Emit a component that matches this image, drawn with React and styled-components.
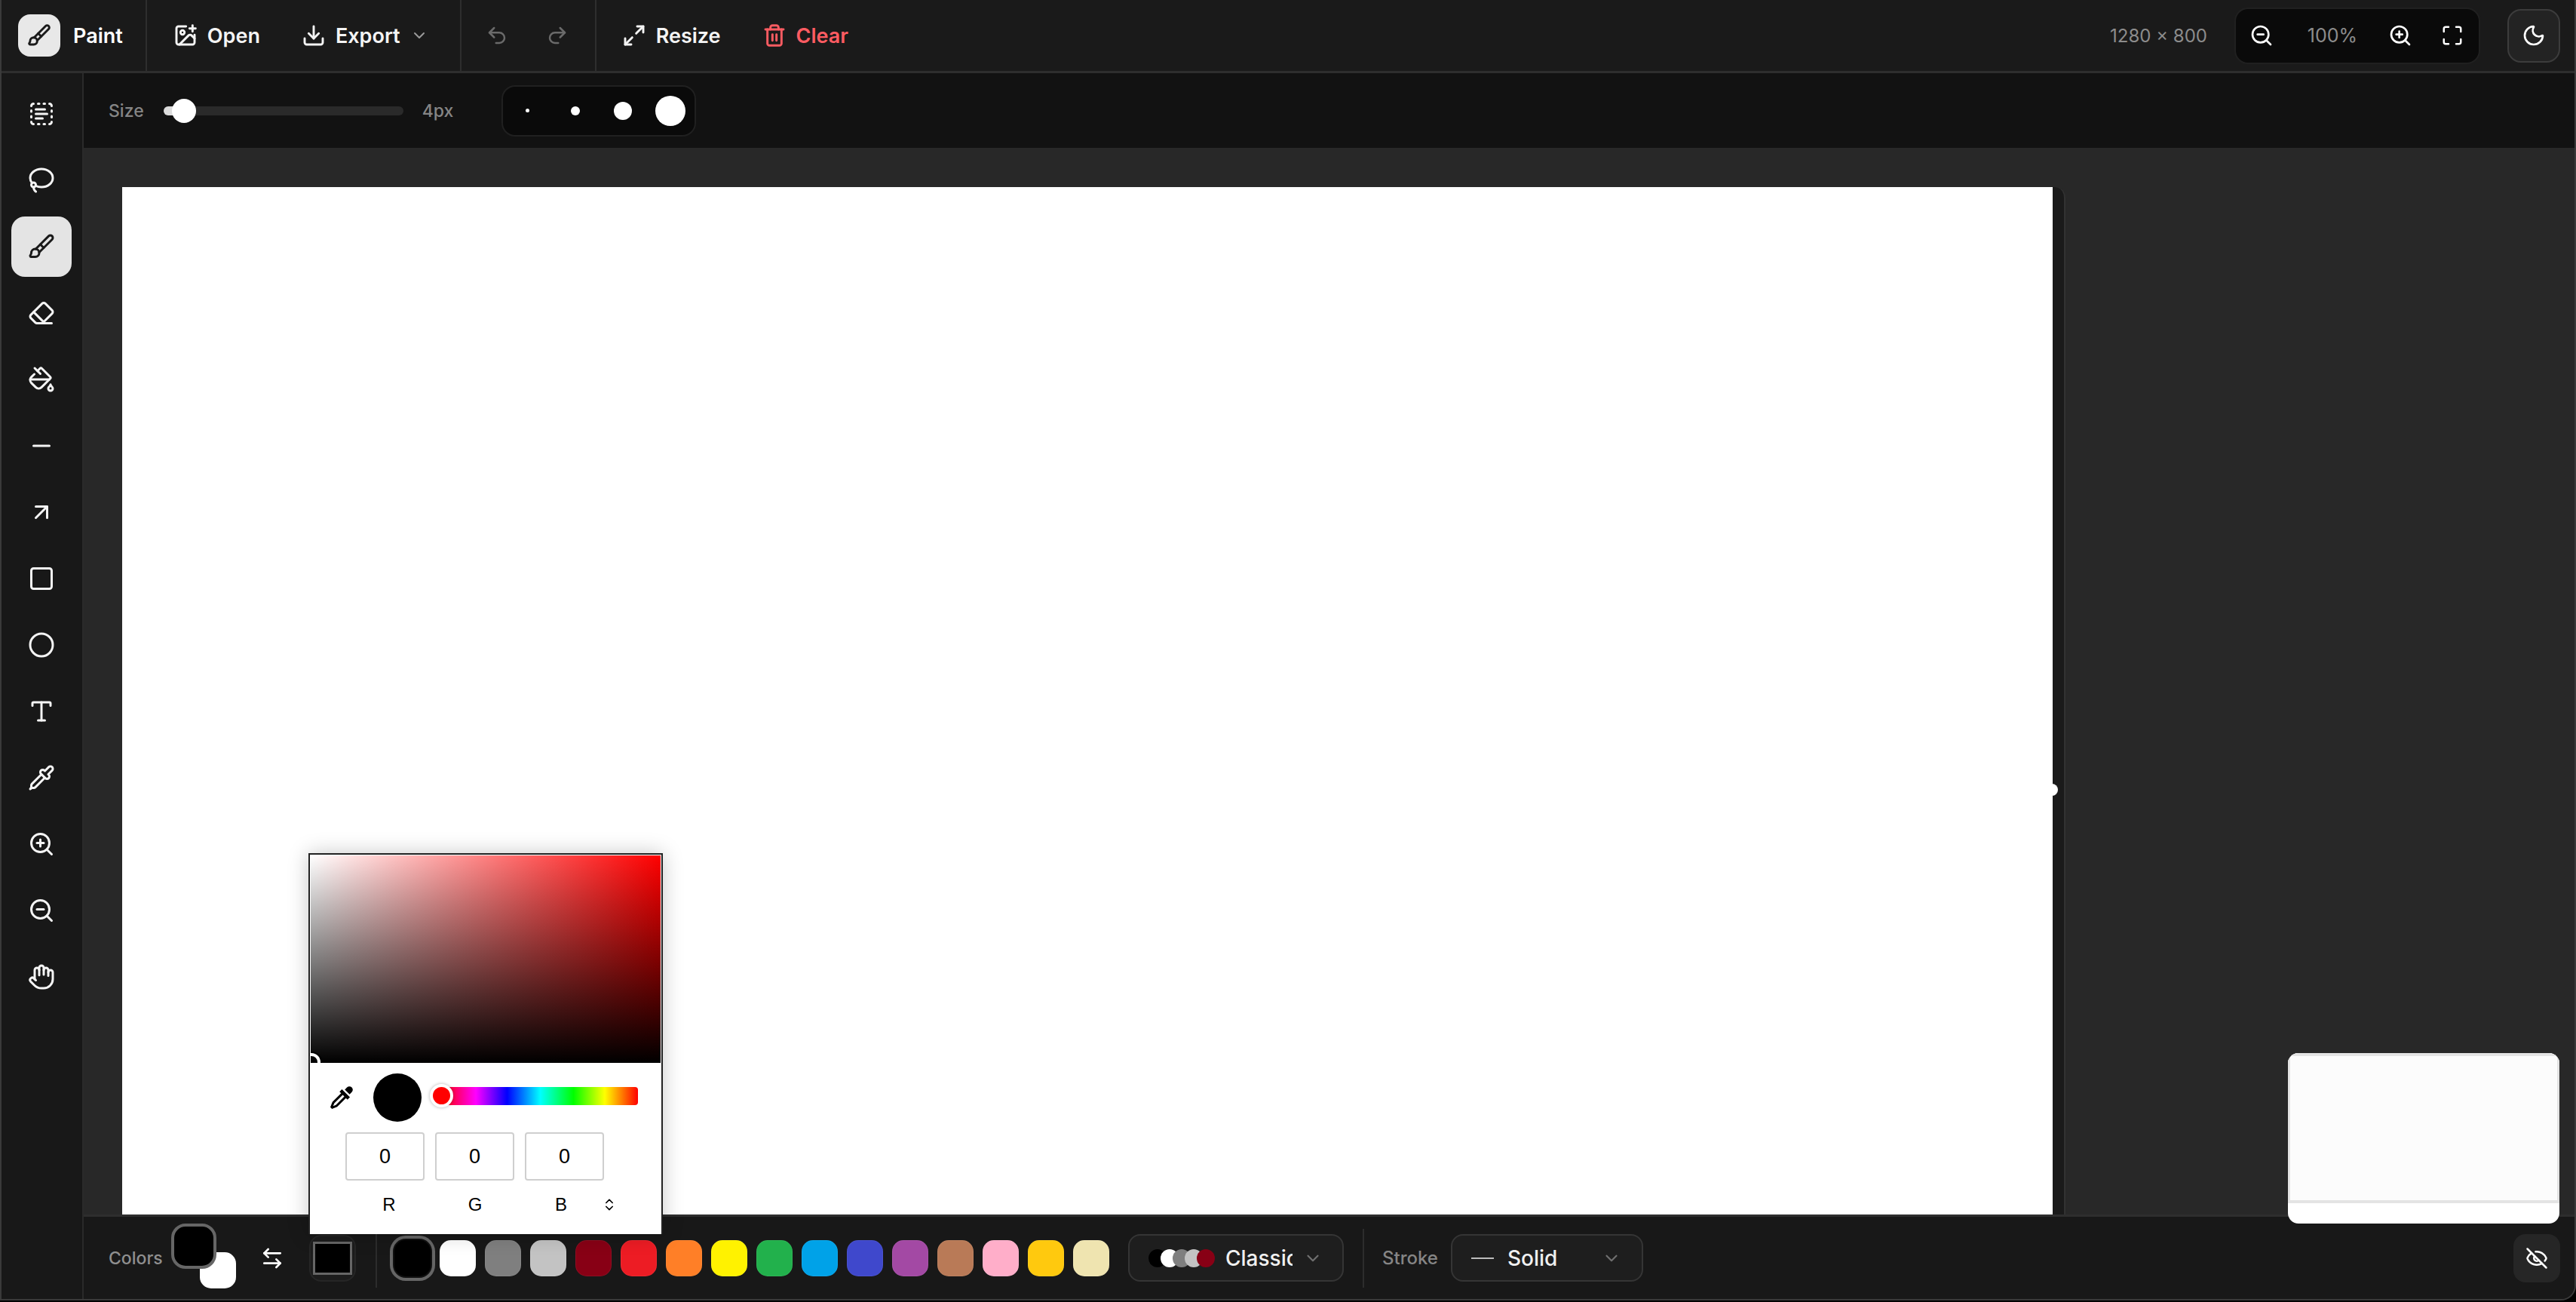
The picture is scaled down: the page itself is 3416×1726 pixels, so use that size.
import React from "react";
import styled, { createGlobalStyle } from "styled-components";
import {
  ArrowLeftRight,
  ArrowUpRight,
  Brush,
  ChevronDown,
  ChevronsUpDown,
  Circle,
  Download,
  Eraser,
  EyeOff,
  Hand,
  ImagePlus,
  Lasso,
  Maximize,
  Maximize2,
  Minus,
  Moon,
  PaintBucket,
  Pipette,
  Redo2,
  Square,
  TextSelect,
  Trash2,
  Type,
  Undo2,
  ZoomIn,
  ZoomOut,
} from "lucide-react";

const GlobalStyle = createGlobalStyle`
  html, body {
    margin: 0;
    padding: 0;
    background: #000;
  }
  * {
    box-sizing: border-box;
  }
`;

const Window = styled.div`
  position: relative;
  width: 3416px;
  height: 1724px;
  display: flex;
  flex-direction: column;
  overflow: hidden;
  background: #1a1a1a;
  border-left: 2px solid #3a3a3a;
  border-right: 2px solid #3a3a3a;
  border-bottom: 2px solid #3a3a3a;
  border-bottom-right-radius: 20px;
  font-family: Inter, "Liberation Sans", sans-serif;
  color: #fff;
`;

const TopBar = styled.header`
  flex: 0 0 97px;
  display: flex;
  align-items: stretch;
  background: #1a1a1a;
  border-bottom: 3px solid #2e2e2e;
`;

const TopGroup = styled.div`
  display: flex;
  align-items: center;
  gap: ${(p) => p.$gap || 0}px;
  padding: 0 ${(p) => p.$right || 0}px 0 ${(p) => p.$left || 0}px;
  border-right: ${(p) => (p.$plain ? "none" : "2px solid #2e2e2e")};
`;

const LogoBox = styled.div`
  width: 56px;
  height: 56px;
  display: flex;
  align-items: center;
  justify-content: center;
  margin-right: 17px;
  border-radius: 16px;
  background: #e8e8e8;
  color: #1a1a1a;
`;

const AppName = styled.span`
  font-size: 27px;
  font-weight: 600;
`;

const TopButton = styled.div`
  display: flex;
  align-items: center;
  gap: 13px;
  font-size: 27px;
  font-weight: 600;
  color: ${(p) => p.$color || "#f4f4f4"};
`;

const HistoryButton = styled.div`
  width: 32px;
  display: flex;
  justify-content: center;
  color: #6a6a6a;
`;

const TopRight = styled.div`
  margin-left: auto;
  display: flex;
  align-items: center;
  padding-right: 19px;
`;

const CanvasSizeText = styled.span`
  margin-right: 36px;
  font-size: 24px;
  color: #8c8c8c;
`;

const ZoomGroup = styled.div`
  width: 326px;
  height: 75px;
  margin-right: 36px;
  display: flex;
  align-items: center;
  padding-left: 18px;
  background: #0a0a0a;
  border: 2px solid #202020;
  border-radius: 18px;
`;

const ZoomPercent = styled.span`
  width: 152px;
  padding-left: 4px;
  text-align: center;
  font-size: 25px;
  color: #8c8c8c;
`;

const ZoomIcon = styled.div`
  width: 32px;
  flex: none;
  margin-left: ${(p) => p.$left || 0}px;
  display: flex;
  justify-content: center;
`;

const ThemeButton = styled.div`
  width: 70px;
  height: 71px;
  display: flex;
  align-items: center;
  justify-content: center;
  background: #232323;
  border: 2px solid #3c3c3c;
  border-radius: 18px;
`;

const Middle = styled.div`
  flex: 1;
  min-height: 0;
  display: flex;
`;

const SideBar = styled.aside`
  flex: 0 0 109px;
  display: flex;
  flex-direction: column;
  gap: 8px;
  padding: 14px 0 0 13px;
  background: #181818;
  border-right: 2px solid #2a2a2a;
`;

const ToolButton = styled.div`
  width: 80px;
  height: 80px;
  display: flex;
  align-items: center;
  justify-content: center;
  border-radius: 18px;
  background: ${(p) => (p.$active ? "#e4e4e4" : "transparent")};
  color: ${(p) => (p.$active ? "#1a1a1a" : "#f4f4f4")};
`;

const Work = styled.div`
  flex: 1;
  min-width: 0;
  display: flex;
  flex-direction: column;
`;

const OptionsBar = styled.div`
  flex: 0 0 99px;
  display: flex;
  align-items: center;
  padding-left: 33px;
  background: #121212;
`;

const OptionLabel = styled.span`
  font-size: ${(p) => p.$size || 23}px;
  font-weight: 500;
  color: #858585;
`;

const SliderTrack = styled.div`
  position: relative;
  width: 318px;
  height: 12px;
  margin: 0 25px 0 26px;
  border-radius: 6px;
  background: #2a2a2a;
`;

const SliderFill = styled.div`
  height: 100%;
  border-radius: 6px 0 0 6px;
  background: #dcdcdc;
`;

const SliderThumb = styled.div`
  position: absolute;
  top: -10px;
  width: 32px;
  height: 32px;
  border-radius: 50%;
  background: #fff;
`;

const DotGroup = styled.div`
  width: 258px;
  height: 68px;
  margin-left: 64px;
  display: flex;
  align-items: center;
  padding: 0 1px;
  background: #0a0a0a;
  border: 2px solid #202020;
  border-radius: 18px;
`;

const DotSlot = styled.div`
  flex: 1;
  display: flex;
  justify-content: center;
`;

const Dot = styled.div`
  width: ${(p) => p.$size}px;
  height: ${(p) => p.$size}px;
  border-radius: 50%;
  background: #fff;
`;

const CanvasArea = styled.div`
  position: relative;
  flex: 1;
  min-height: 0;
  overflow: hidden;
  padding: 52px 0 0 51px;
  background: #282828;
`;

const CanvasFrame = styled.div`
  position: relative;
  width: 2577px;
  height: 1600px;
  padding-right: 17px;
  background: #1a1a1a;
  border-top-right-radius: 14px;
  border-right: 2px solid #323232;
`;

const Paper = styled.div`
  width: 2560px;
  height: 1600px;
  background: #fff;
`;

const ResizeHandle = styled.div`
  position: absolute;
  top: 791px;
  left: 2551px;
  width: 16px;
  height: 16px;
  border-radius: 50%;
  background: #fff;
`;

const BottomBar = styled.footer`
  position: relative;
  flex: 0 0 112px;
  display: flex;
  align-items: center;
  padding: 0 19px 0 33px;
  background: #181818;
  border-top: 3px solid #2e2e2e;
`;

const ColorsLabel = styled(OptionLabel)`
  width: 83px;
  color: #8f8f8f;
`;

const ColorPair = styled.div`
  position: relative;
  width: 88px;
  height: 86px;
  margin-bottom: 6px;
`;

const MainColor = styled.div`
  position: absolute;
  top: 0;
  left: 0;
  z-index: 1;
  width: 60px;
  height: 60px;
  border-radius: 19px;
  background: #000;
  border: 4px solid #666;
`;

const SubColor = styled.div`
  position: absolute;
  top: 38px;
  left: 38px;
  width: 48px;
  height: 48px;
  border-radius: 15px;
  background: #fff;
`;

const SwapIcon = styled.div`
  width: 32px;
  margin-left: 30px;
  display: flex;
  justify-content: center;
`;

const ColorWell = styled.div`
  width: 62px;
  height: 62px;
  margin-left: 33px;
  display: flex;
  align-items: center;
  justify-content: center;
  background: #1c1c1c;
  border: 2px solid #262626;
  border-radius: 16px;
`;

const WellFill = styled.div`
  width: 52px;
  height: 44px;
  background: #000;
  border: 3px solid #666;
`;

const BarDivider = styled.div`
  width: 2px;
  height: 78px;
  margin: 0 ${(p) => p.$right || 0}px 0 ${(p) => p.$left || 0}px;
  background: #2c2c2c;
`;

const Swatches = styled.div`
  display: flex;
  gap: 12px;
`;

const Swatch = styled.div`
  width: 48px;
  height: 48px;
  border-radius: 15px;
  background: ${(p) => p.$color};
  box-shadow: ${(p) =>
    p.$selected ? "0 0 0 2px #111, 0 0 0 6px #666" : "inset 0 0 0 1px rgba(255,255,255,.06)"};
`;

const SelectBox = styled.div`
  height: 63px;
  display: flex;
  align-items: center;
  background: #1e1e1e;
  border: 2px solid #353535;
  border-radius: 16px;
`;

const PaletteSelect = styled(SelectBox)`
  width: 286px;
  margin-left: 25px;
  padding-left: 25px;
`;

const StrokeSelect = styled(SelectBox)`
  width: 255px;
  margin-left: 17px;
  padding-left: 25px;
`;

const PaletteDots = styled.div`
  display: flex;
  margin-right: 22px;
`;

const PaletteDot = styled.div`
  width: 24px;
  height: 24px;
  margin-right: -8px;
  border-radius: 50%;
  background: ${(p) => p.$color};
`;

const SelectText = styled.span`
  font-size: 28px;
  font-weight: 500;
  color: #f0f0f0;
  overflow: hidden;
  white-space: nowrap;
  width: ${(p) => p.$width}px;
`;

const StrokeLine = styled.div`
  width: 30px;
  height: 2px;
  margin-right: 18px;
  background: #bdbdbd;
`;

const ChevronSlot = styled.div`
  display: flex;
  color: #707070;
  margin-left: ${(p) => p.$left}px;
`;

const VisibilityButton = styled.div`
  width: 62px;
  height: 64px;
  margin-left: auto;
  display: flex;
  align-items: center;
  justify-content: center;
  background: #262626;
  border-radius: 16px;
`;

const MiniMap = styled.div`
  position: absolute;
  right: 20px;
  top: 1396px;
  width: 360px;
  height: 226px;
  overflow: hidden;
  background: #fff;
  border-radius: 14px;
`;

const MiniMapView = styled.div`
  height: 199px;
  background: #fcfcfc;
  border: 4px solid #e4e4e4;
  border-left-width: 3px;
  border-right-width: 3px;
`;

const Picker = styled.div`
  position: absolute;
  left: 407px;
  top: 1131px;
  z-index: 5;
  width: 470px;
  height: 505px;
  background: #fff;
  border: 2px solid #222;
  border-bottom: none;
  box-shadow: 0 0 26px rgba(0, 0, 0, 0.22);
  font-family: "Liberation Sans", Arial, sans-serif;
  color: #000;
`;

const Saturation = styled.div`
  position: relative;
  height: 275px;
  margin: 1px 1px 0;
  overflow: hidden;
  background: linear-gradient(to top, #000, transparent),
    linear-gradient(to right, #fff, #f00);
`;

const SaturationPointer = styled.div`
  position: absolute;
  left: -11px;
  bottom: -11px;
  width: 24px;
  height: 24px;
  border-radius: 50%;
  border: 4px solid #fff;
  box-shadow: 0 0 0 2px #000;
`;

const PickerRow = styled.div`
  position: relative;
  height: 64px;
  margin-top: 14px;
  display: flex;
  align-items: center;
  padding-left: 24px;
`;

const ColorDot = styled.div`
  width: 64px;
  height: 64px;
  margin-left: 24px;
  border-radius: 50%;
  background: #000;
`;

const HueBar = styled.div`
  position: relative;
  width: 259px;
  height: 24px;
  margin: 0 0 4px 28px;
  border-radius: 4px;
  background: linear-gradient(
    to right,
    #f00,
    #f0f 17%,
    #00f 33%,
    #0ff 50%,
    #0f0 67%,
    #ff0 83%,
    #f00
  );
`;

const HueThumb = styled.div`
  position: absolute;
  left: -17px;
  top: -4px;
  width: 31px;
  height: 31px;
  border-radius: 50%;
  background: #f00;
  border: 4px solid #fff;
  box-shadow: 0 0 4px rgba(0, 0, 0, 0.3);
`;

const InputRow = styled.div`
  display: flex;
  gap: 14px;
  margin: 14px 0 0 47px;
`;

const ChannelBox = styled.div`
  width: 105px;
  height: 64px;
  display: flex;
  align-items: center;
  justify-content: center;
  border: 2px solid #cfcfcf;
  border-radius: 4px;
  font-size: 27px;
`;

const LabelRow = styled.div`
  position: relative;
  display: flex;
  margin: 18px 0 0 48px;
  font-size: 24px;
  line-height: 28px;
`;

const ChannelLabel = styled.span`
  width: 114px;
  text-align: center;
`;

const ModeToggle = styled.div`
  position: absolute;
  left: 339px;
  top: 4px;
  display: flex;
`;

const tools = [
  TextSelect,
  Lasso,
  Brush,
  Eraser,
  PaintBucket,
  Minus,
  ArrowUpRight,
  Square,
  Circle,
  Type,
  Pipette,
  ZoomIn,
  ZoomOut,
  Hand,
];

const classicColors = [
  "#000000",
  "#ffffff",
  "#7f7f7f",
  "#c3c3c3",
  "#880015",
  "#ed1c24",
  "#ff7f27",
  "#fff200",
  "#22b14c",
  "#00a2e8",
  "#3f48cc",
  "#a349a4",
  "#b97a57",
  "#ffaec9",
  "#ffc90e",
  "#efe4b0",
];

const EyedropperIcon = () => (
  <svg width="36" height="36" viewBox="0 0 24 24" fill="#000">
    <path d="M19.35,11.72L17.22,13.85L15.81,12.43L8.1,20.14L3.5,22L2,20.5L3.86,15.9L11.57,8.19L10.15,6.78L12.28,4.65L19.35,11.72M16.76,3C17.93,1.83 19.83,1.83 21,3C22.17,4.17 22.17,6.07 21,7.24L19.08,9.16L14.84,4.92L16.76,3M5.56,17.03L4.5,19.5L6.97,18.44L14.4,11L13,9.6L5.56,17.03Z" />
  </svg>
);

const App = () => {
  return (
    <>
      <GlobalStyle />
      <Window>
        <TopBar>
          <TopGroup $left={22} $right={30}>
            <LogoBox>
              <Brush size={32} strokeWidth={2.2} />
            </LogoBox>
            <AppName>Paint</AppName>
          </TopGroup>
          <TopGroup $left={35} $right={42} $gap={55}>
            <TopButton>
              <ImagePlus size={32} strokeWidth={2.2} />
              Open
            </TopButton>
            <TopButton>
              <Download size={32} strokeWidth={2.2} />
              Export
              <ChevronDown size={24} color="#9a9a9a" />
            </TopButton>
          </TopGroup>
          <TopGroup $left={31} $right={34} $gap={48}>
            <HistoryButton>
              <Undo2 size={30} strokeWidth={2} />
            </HistoryButton>
            <HistoryButton>
              <Redo2 size={30} strokeWidth={2} />
            </HistoryButton>
          </TopGroup>
          <TopGroup $left={34} $gap={55} $plain>
            <TopButton>
              <Maximize2 size={32} strokeWidth={2.2} />
              Resize
            </TopButton>
            <TopButton $color="#ff5c62">
              <Trash2 size={32} strokeWidth={2.2} />
              Clear
            </TopButton>
          </TopGroup>
          <TopRight>
            <CanvasSizeText>1280 x 800</CanvasSizeText>
            <ZoomGroup>
              <ZoomIcon>
                <ZoomOut size={32} />
              </ZoomIcon>
              <ZoomPercent>100%</ZoomPercent>
              <ZoomIcon>
                <ZoomIn size={32} />
              </ZoomIcon>
              <ZoomIcon $left={37}>
                <Maximize size={30} />
              </ZoomIcon>
            </ZoomGroup>
            <ThemeButton>
              <Moon size={32} />
            </ThemeButton>
          </TopRight>
        </TopBar>

        <Middle>
          <SideBar>
            {tools.map((Icon, index) => (
              <ToolButton key={index} $active={index === 2}>
                <Icon size={36} strokeWidth={2} />
              </ToolButton>
            ))}
          </SideBar>
          <Work>
            <OptionsBar>
              <OptionLabel>Size</OptionLabel>
              <SliderTrack>
                <SliderFill style={{ width: 27 }} />
                <SliderThumb style={{ left: 11 }} />
              </SliderTrack>
              <OptionLabel>4px</OptionLabel>
              <DotGroup>
                {[5, 12, 24, 40].map((size) => (
                  <DotSlot key={size}>
                    <Dot $size={size} />
                  </DotSlot>
                ))}
              </DotGroup>
            </OptionsBar>
            <CanvasArea>
              <CanvasFrame>
                <Paper />
                <ResizeHandle />
              </CanvasFrame>
            </CanvasArea>
            <BottomBar>
              <ColorsLabel>Colors</ColorsLabel>
              <ColorPair>
                <MainColor />
                <SubColor />
              </ColorPair>
              <SwapIcon>
                <ArrowLeftRight size={32} strokeWidth={2} />
              </SwapIcon>
              <ColorWell>
                <WellFill />
              </ColorWell>
              <BarDivider $left={26} $right={23} />
              <Swatches>
                {classicColors.map((color, index) => (
                  <Swatch key={color} $color={color} $selected={index === 0} />
                ))}
              </Swatches>
              <PaletteSelect>
                <PaletteDots>
                  {classicColors.slice(0, 5).map((color) => (
                    <PaletteDot key={color} $color={color} />
                  ))}
                </PaletteDots>
                <SelectText $width={89}>Classic</SelectText>
                <ChevronSlot $left={14}>
                  <ChevronDown size={26} />
                </ChevronSlot>
              </PaletteSelect>
              <BarDivider $left={25} $right={24} />
              <OptionLabel $size={24}>Stroke</OptionLabel>
              <StrokeSelect>
                <StrokeLine />
                <SelectText $width={66}>Solid</SelectText>
                <ChevronSlot $left={59}>
                  <ChevronDown size={26} />
                </ChevronSlot>
              </StrokeSelect>
              <VisibilityButton>
                <EyeOff size={30} />
              </VisibilityButton>
            </BottomBar>
          </Work>
        </Middle>

        <MiniMap>
          <MiniMapView />
        </MiniMap>

        <Picker>
          <Saturation>
            <SaturationPointer />
          </Saturation>
          <PickerRow>
            <EyedropperIcon />
            <ColorDot />
            <HueBar>
              <HueThumb />
            </HueBar>
          </PickerRow>
          <InputRow>
            <ChannelBox>0</ChannelBox>
            <ChannelBox>0</ChannelBox>
            <ChannelBox>0</ChannelBox>
          </InputRow>
          <LabelRow>
            <ChannelLabel>R</ChannelLabel>
            <ChannelLabel>G</ChannelLabel>
            <ChannelLabel>B</ChannelLabel>
            <ModeToggle>
              <ChevronsUpDown size={20} />
            </ModeToggle>
          </LabelRow>
        </Picker>
      </Window>
    </>
  );
};

export default App;
